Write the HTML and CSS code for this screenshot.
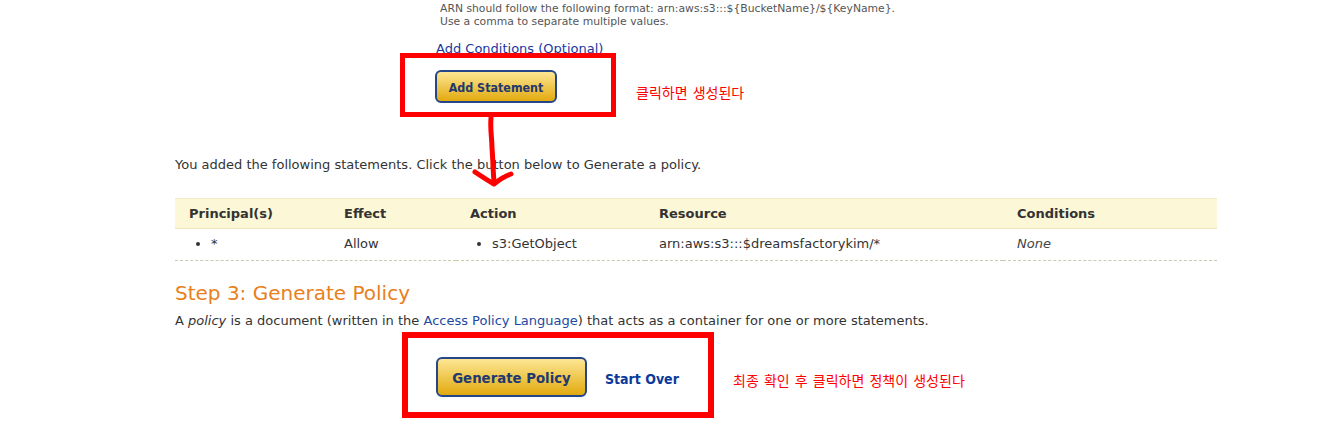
FILE: index.html
```html
<!DOCTYPE html>
<html lang="en">
<head>
    <meta charset="UTF-8">
    <title>AWS Policy Generator</title>
    <link rel="stylesheet" href="styles.css">
</head>
<body>

    <div class="page">
        <!-- Step 2 tail: resource hint and add statement -->
        <div class="hint">
            <p>ARN should follow the following format: arn:aws:s3:::${BucketName}/${KeyName}.</p>
            <p>Use a comma to separate multiple values.</p>
        </div>

        <a class="conditions" href="#">Add Conditions (Optional)</a>

        <div class="marked-row">
            <div class="mark mark-small">
                <button class="btn btn-small">Add Statement</button>
            </div>
            <span class="note">클릭하면 생성된다</span>
        </div>

        <p class="added">You added the following statements. Click the button below to Generate a policy.</p>

        <table class="statements">
            <thead>
                <tr>
                    <th class="col-principal">Principal(s)</th>
                    <th class="col-effect">Effect</th>
                    <th class="col-action">Action</th>
                    <th class="col-resource">Resource</th>
                    <th class="col-conditions">Conditions</th>
                </tr>
            </thead>
            <tbody>
                <tr>
                    <td><ul><li>*</li></ul></td>
                    <td>Allow</td>
                    <td><ul><li>s3:GetObject</li></ul></td>
                    <td>arn:aws:s3:::$dreamsfactorykim/*</td>
                    <td><em>None</em></td>
                </tr>
            </tbody>
        </table>

        <!-- Step 3 -->
        <h2 class="step">Step 3: Generate Policy</h2>
        <p class="intro">A <em>policy</em> is a document (written in the <a href="#">Access Policy Language</a>) that acts as a container for one or more statements.</p>

        <div class="marked-row final">
            <div class="mark mark-big">
                <button class="btn btn-big">Generate Policy</button>
                <a class="start-over" href="#">Start Over</a>
            </div>
            <span class="note">최종 확인 후 클릭하면 정책이 생성된다</span>
        </div>

        <!-- hand drawn arrow from the first box down to the table -->
        <svg class="arrow" width="60" height="80" viewBox="0 0 60 80">
            <path d="M26 2 C25 14 27 22 27 32 C28 44 28 54 29 66" />
            <path d="M10 56 C16 60 22 64 29 68 C34 64 40 60 46 58" />
        </svg>
    </div>

</body>
</html>
```

FILE: styles.css
```css
* {
    box-sizing: border-box;
}

body {
    margin: 0;
    background: #ffffff;
    font-family: "DejaVu Sans", sans-serif;
    font-size: 13px;
    color: #333333;
}

.page {
    position: relative;
    width: 1042px;
    margin-left: 175px;
}

a {
    color: #1c40a6;
    text-decoration: none;
}

/* Hint text under the ARN field */
.hint {
    margin-left: 265px;
    padding-top: 2px;
    font-size: 10.8px;
    line-height: 13px;
    color: #555555;
}

.hint p {
    margin: 0;
}

.conditions {
    display: block;
    margin: 13px 0 0 261px;
    font-size: 13px;
    line-height: 16px;
    color: #1a37a0;
}

/* Red annotation boxes */
.marked-row {
    position: relative;
    display: flex;
    align-items: center;
}

.mark {
    display: flex;
    align-items: center;
    border: 5px solid #ff0000;
    background: #ffffff;
}

.mark-small {
    margin: -4px 0 0 225px;
    width: 216px;
    height: 64px;
    padding-left: 30px;
}

.mark-big {
    margin-left: 227px;
    width: 312px;
    height: 86px;
    padding-left: 28px;
    border-width: 6px;
}

.note {
    font-family: "Noto Sans CJK KR", sans-serif;
    font-size: 14px;
    word-spacing: 2px;
    color: #ff0000;
}

.mark-small + .note {
    margin-left: 20px;
    padding-top: 10px;
}

.final .note {
    margin-left: 19px;
    padding-top: 10px;
}

/* Yellow buttons */
.btn {
    font-family: "DejaVu Sans Condensed", "DejaVu Sans", sans-serif;
    font-weight: bold;
    color: #22386f;
    border: 2px solid #25478a;
    border-radius: 6px;
    background: linear-gradient(#fde693, #e2aa0f);
    cursor: pointer;
}

.btn-small {
    width: 122px;
    height: 33px;
    margin-top: 3px;
    padding-top: 2px;
    font-size: 12.4px;
}

.btn-big {
    width: 151px;
    height: 40px;
    margin-top: 4px;
    font-size: 14.8px;
}

.start-over {
    margin: 8px 0 0 18px;
    font-family: "DejaVu Sans Condensed", "DejaVu Sans", sans-serif;
    font-size: 14px;
    font-weight: bold;
    color: #0b3a9a;
}

.added {
    margin: 40px 0 0;
    line-height: 16px;
}

/* Statements table */
.statements {
    width: 100%;
    margin-top: 25px;
    border-collapse: collapse;
}

.statements th {
    height: 30px;
    padding: 0 0 0 14px;
    text-align: left;
    background: #fcf7d6;
    border-top: 1px solid #f0ebc4;
    border-bottom: 1px solid #ede8c0;
    color: #333333;
}

.statements td {
    height: 32px;
    padding: 0 0 2px 14px;
    border-bottom: 1px dashed #cbcbaa;
    color: #333333;
}

.statements ul {
    margin: 0;
    padding-left: 22px;
}

.statements td em {
    color: #444444;
}

.col-principal { width: 155px; }
.col-effect { width: 126px; }
.col-action { width: 189px; }
.col-resource { width: 358px; }

/* Step 3 */
.step {
    margin: 20px 0 0;
    font-size: 20px;
    font-weight: normal;
    line-height: 24px;
    color: #e8801c;
}

.intro {
    margin: 8px 0 0;
    line-height: 16px;
}

.intro a {
    color: #2149a3;
}

.final {
    margin-top: 3px;
}

/* Hand drawn arrow, lies over the text */
.arrow {
    position: absolute;
    left: 290px;
    top: 116px;
}

.arrow path {
    fill: none;
    stroke: #ff0000;
    stroke-width: 5;
    stroke-linecap: round;
    stroke-linejoin: round;
}
```
